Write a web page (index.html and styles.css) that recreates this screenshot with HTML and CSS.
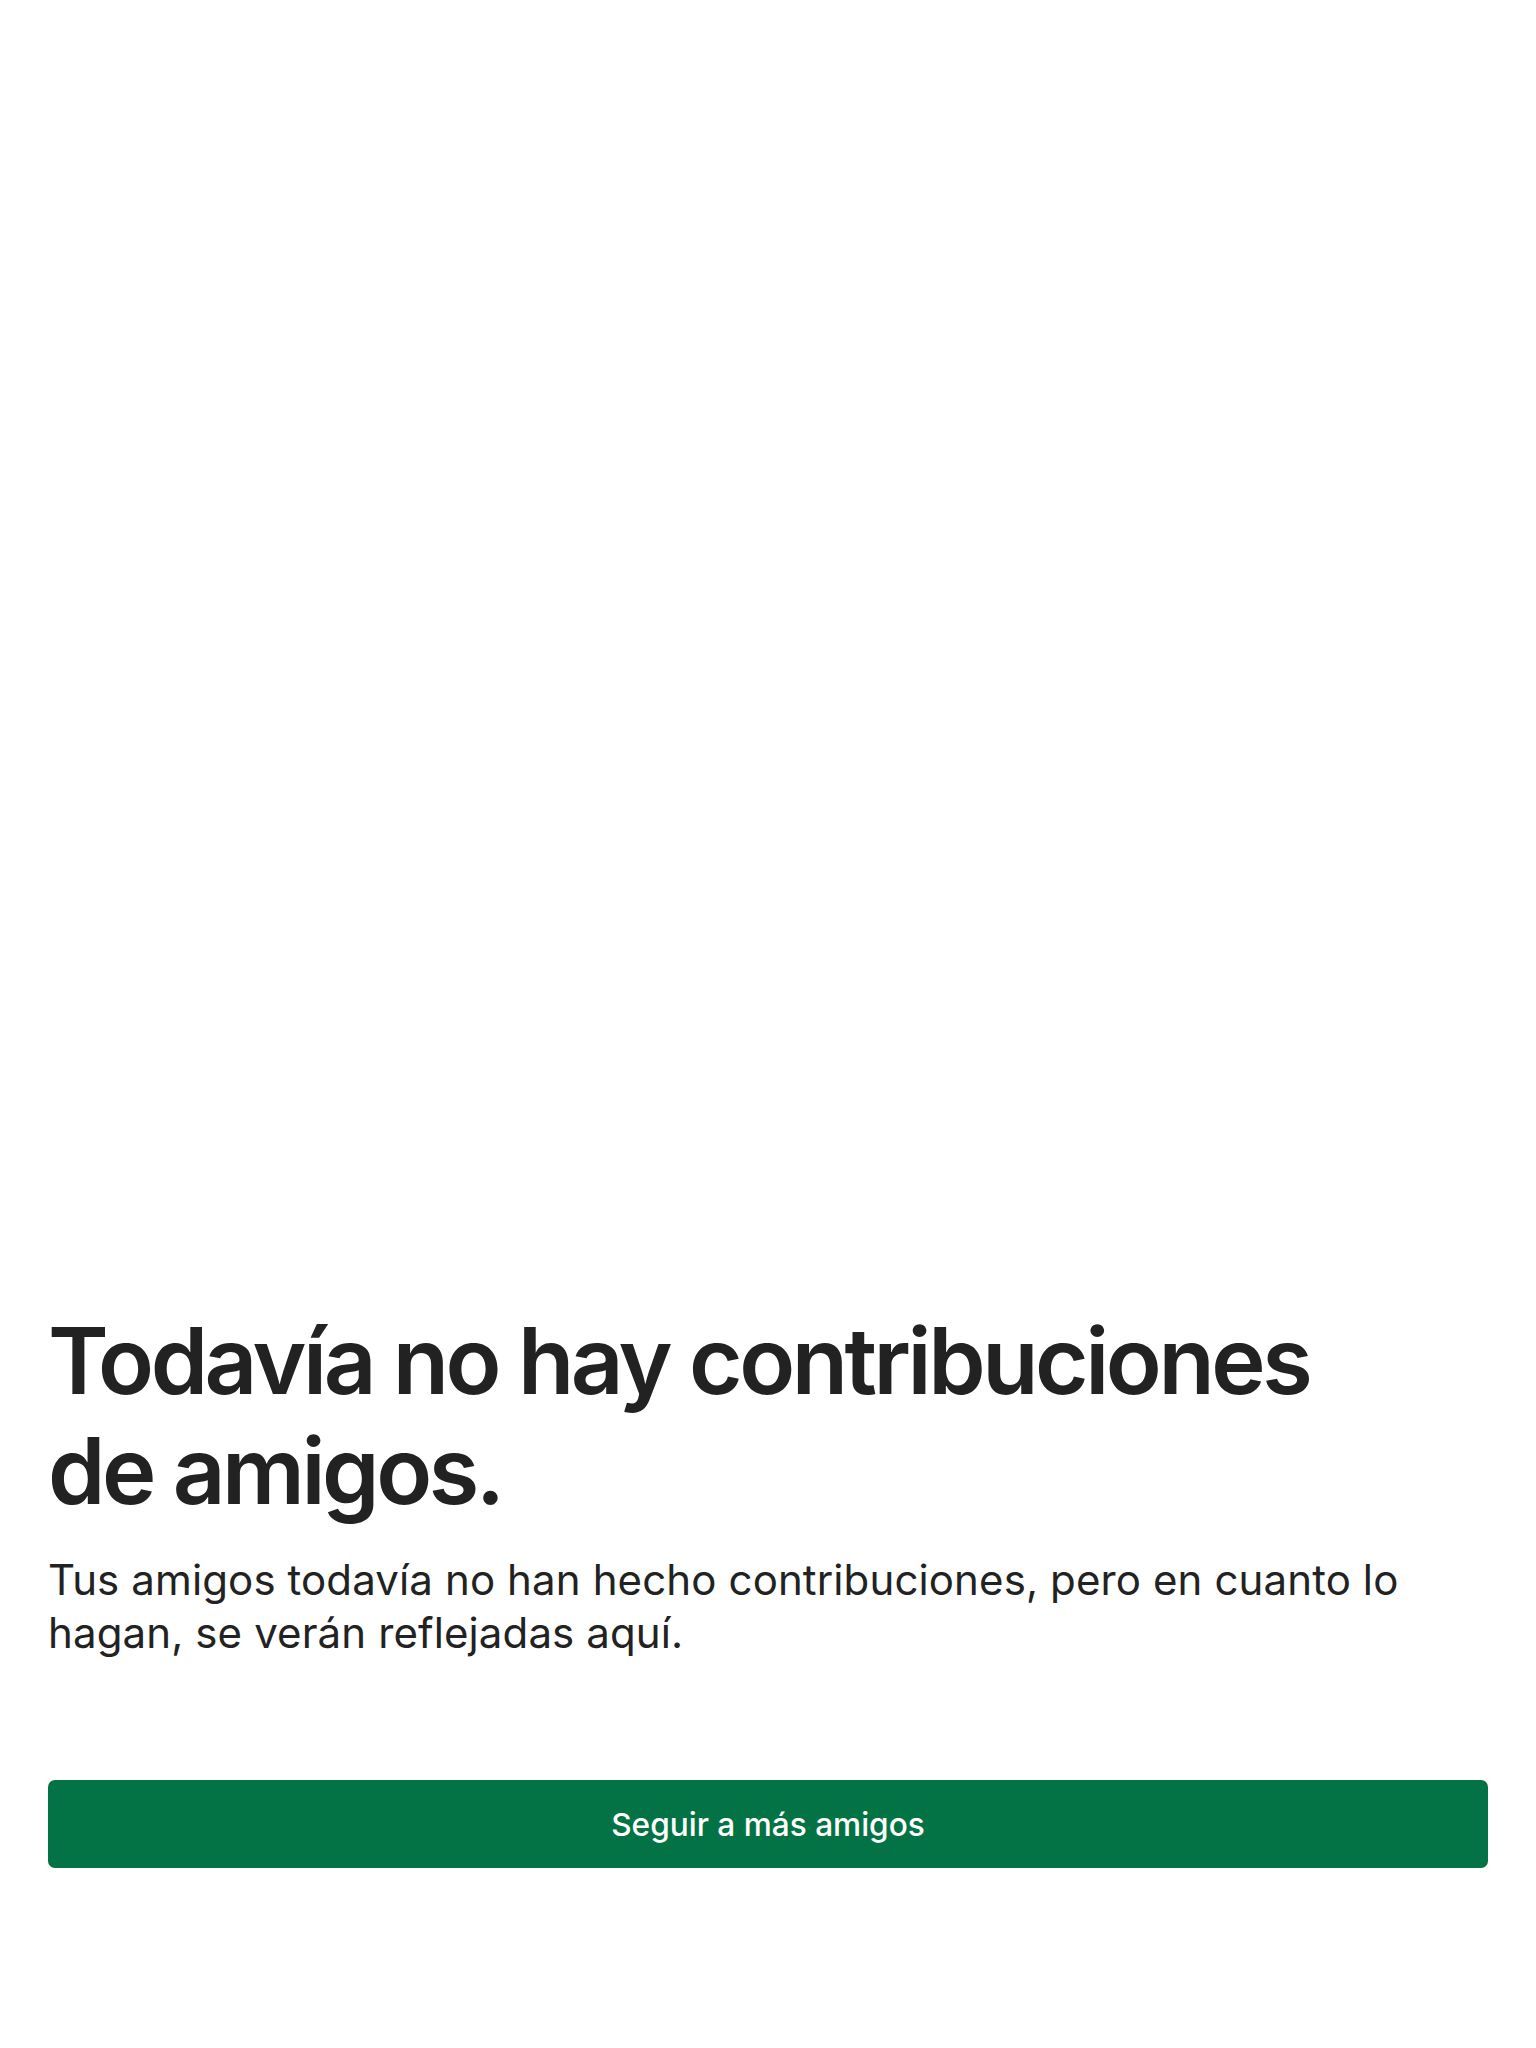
FILE: index.html
```html
<!DOCTYPE html>
<html lang="es">
<head>
<meta charset="utf-8">
<title>Contribuciones</title>
<link rel="stylesheet" href="styles.css">
</head>
<body>
<main class="page">
  <section class="empty">
    <h1 class="empty-title">Todavía no hay contribuciones de amigos.</h1>
    <p class="empty-text">Tus amigos todavía no han hecho contribuciones, pero en cuanto lo hagan, se verán reflejadas aquí.</p>
    <button class="primary-btn" type="button">Seguir a más amigos</button>
  </section>
</main>
</body>
</html>
```
FILE: styles.css
```css
html, body {
  margin: 0;
  padding: 0;
  background: #ffffff;
}
body {
  font-family: Inter, "Noto Sans", "Liberation Sans", sans-serif;
  color: #222222;
}
.page {
  min-height: 2048px;
  box-sizing: border-box;
  display: flex;
  flex-direction: column;
  justify-content: flex-end;
  padding: 0 48px 180px;
}
.empty {
  display: flex;
  flex-direction: column;
}
.empty-title {
  margin: 0;
  font-size: 92px;
  line-height: 110px;
  font-weight: 600;
  letter-spacing: -3.45px;
  max-width: 1340px;
  color: #222222;
}
.empty-text {
  margin: 27px 0 0;
  font-size: 42px;
  line-height: 53px;
  font-weight: 400;
  letter-spacing: 0.12px;
  color: #222222;
  max-width: 1420px;
}
.primary-btn {
  margin-top: 121px;
  height: 88px;
  width: 100%;
  border: 0;
  border-radius: 7px;
  background: #037244;
  color: #ffffff;
  font-family: Inter, "Noto Sans", "Liberation Sans", sans-serif;
  font-size: 31.6px;
  font-weight: 500;
  cursor: pointer;
}
```
